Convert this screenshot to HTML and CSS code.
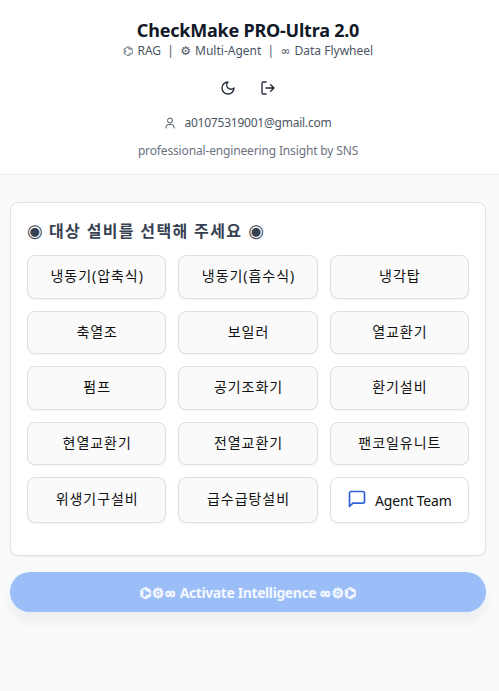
FILE: index.html
```html
<!DOCTYPE html>
<html lang="ko">
<head>
  <meta charset="UTF-8">
  <title>CheckMake PRO-Ultra 2.0</title>
  <link rel="stylesheet" href="styles.css">
</head>
<body>
  <header class="header">
    <h1>CheckMake PRO-Ultra 2.0</h1>
    <p class="subtitle"><span class="sym">⌬</span> RAG &nbsp;|&nbsp; <span class="sym">⚙</span> Multi-Agent &nbsp;|&nbsp; <span class="sym">∞</span> Data Flywheel</p>
    <div class="actions">
      <button class="icon-btn" aria-label="테마">
        <svg viewBox="0 0 24 24"><path d="M12 3a6 6 0 0 0 9 9 9 9 0 1 1-9-9Z"/></svg>
      </button>
      <button class="icon-btn" aria-label="로그아웃">
        <svg viewBox="0 0 24 24"><path d="M9 21H5a2 2 0 0 1-2-2V5a2 2 0 0 1 2-2h4"/><path d="m16 17 5-5-5-5M21 12H9"/></svg>
      </button>
    </div>
    <div class="user">
      <svg viewBox="0 0 24 24"><circle cx="12" cy="7" r="5"/><path d="M4 22v-2a5 5 0 0 1 5-5h6a5 5 0 0 1 5 5v2"/></svg>
      <span>a01075319001@gmail.com</span>
    </div>
    <p class="tagline">professional-engineering Insight by SNS</p>
  </header>

  <main class="main">
    <section class="card">
      <h2><span class="dot">◉</span><span>대상 설비를 선택해 주세요</span><span class="dot">◉</span></h2>
      <div class="grid">
        <button class="item">냉동기(압축식)</button>
        <button class="item">냉동기(흡수식)</button>
        <button class="item">냉각탑</button>
        <button class="item">축열조</button>
        <button class="item">보일러</button>
        <button class="item">열교환기</button>
        <button class="item">펌프</button>
        <button class="item">공기조화기</button>
        <button class="item">환기설비</button>
        <button class="item">현열교환기</button>
        <button class="item">전열교환기</button>
        <button class="item">팬코일유니트</button>
        <button class="item last">위생기구설비</button>
        <button class="item last">급수급탕설비</button>
        <button class="item agent">
          <svg viewBox="0 0 24 24"><path d="M21 15a2 2 0 0 1-2 2H7l-4 4V5a2 2 0 0 1 2-2h14a2 2 0 0 1 2 2z"/></svg>
          <span>Agent Team</span>
        </button>
      </div>
    </section>
    <button class="activate"><span class="sym">⌬⚙∞</span> Activate Intelligence <span class="sym">∞⚙⌬</span></button>
  </main>
</body>
</html>
```

FILE: styles.css
```css
* { box-sizing: border-box; }
body {
  margin: 0;
  min-height: 691px;
  background: #f9fafb;
  color: #111827;
  font-family: "Noto Sans", "Noto Sans CJK KR", sans-serif;
}
h1, h2, p { margin: 0; }
button { font-family: inherit; padding: 0; }
svg { fill: none; stroke: currentColor; stroke-width: 2; stroke-linecap: round; stroke-linejoin: round; }

.header {
  height: 175px;
  padding: 18px 3px 0 0;
  background: #fff;
  border-bottom: 1px solid #eceef0;
  display: flex;
  flex-direction: column;
  align-items: center;
  white-space: nowrap;
}
.header h1 { font-size: 18px; line-height: 24px; font-weight: 700; letter-spacing: -.22px; }
.subtitle { font-size: 12px; line-height: 17px; color: #4b5563; }
.sym { font-family: "DejaVu Sans", sans-serif; font-size: 12px; }
.subtitle .sym { margin-right: 1px; }
.actions { display: flex; gap: 24px; margin-top: 20px; }
.icon-btn { width: 16px; height: 16px; border: 0; background: none; color: #1f2937; }
.icon-btn svg { display: block; width: 16px; height: 16px; }
.user { display: flex; align-items: center; gap: 8px; margin-top: 18px; font-size: 12px; line-height: 18px; color: #4b5563; letter-spacing: -.22px; }
.user svg { width: 12px; height: 12px; }
.tagline { margin-top: 10px; font-size: 12px; line-height: 18px; color: #6b7280; letter-spacing: -.15px; }

.main { padding: 27px 13px 0 10px; }
.card {
  height: 354px;
  padding: 16px;
  background: #fff;
  border: 1px solid #dfe1e5;
  border-radius: 8px;
  box-shadow: 0 1px 2px rgba(0, 0, 0, .05);
}
.card h2 {
  display: flex;
  gap: 6px;
  margin-bottom: 12px;
  font-size: 16px;
  line-height: 24px;
  font-weight: 600;
  letter-spacing: 1.35px;
  color: #374151;
  white-space: nowrap;
}
.dot { width: 16px; font-family: "DejaVu Sans", sans-serif; font-size: 18px; font-weight: 400; letter-spacing: 0; }
.grid { display: grid; grid-template-columns: repeat(3, 1fr); grid-template-rows: repeat(4, 43.5px) 46px; gap: 12px; }
.item {
  padding-bottom: 3px;
  padding-left: 1px;
  background: #fafafa;
  border: 1px solid #dedfe2;
  border-radius: 8px;
  box-shadow: 0 1px 2px rgba(0, 0, 0, .05);
  color: #111;
  font-size: 14px;
  letter-spacing: .95px;
  white-space: nowrap;
}
.last { padding-bottom: 5px; }
.agent { display: flex; align-items: center; justify-content: center; gap: 8px; padding: 0 0 2px; background: #fff; letter-spacing: -.2px; }
.agent svg { width: 20px; height: 20px; color: #2f62d9; }
.agent span { padding-top: 3px; }
.activate {
  display: block;
  width: 100%;
  height: 40px;
  margin-top: 16px;
  border: 0;
  border-radius: 20px;
  background: #9bbdf8;
  color: #f4f8ff;
  font-size: 14px;
  font-weight: 700;
  letter-spacing: -.4px;
  box-shadow: 0 8px 14px rgba(0, 0, 0, .06);
}
.activate .sym { font-size: 14px; letter-spacing: .2px; -webkit-text-stroke: .7px currentColor; }
```
